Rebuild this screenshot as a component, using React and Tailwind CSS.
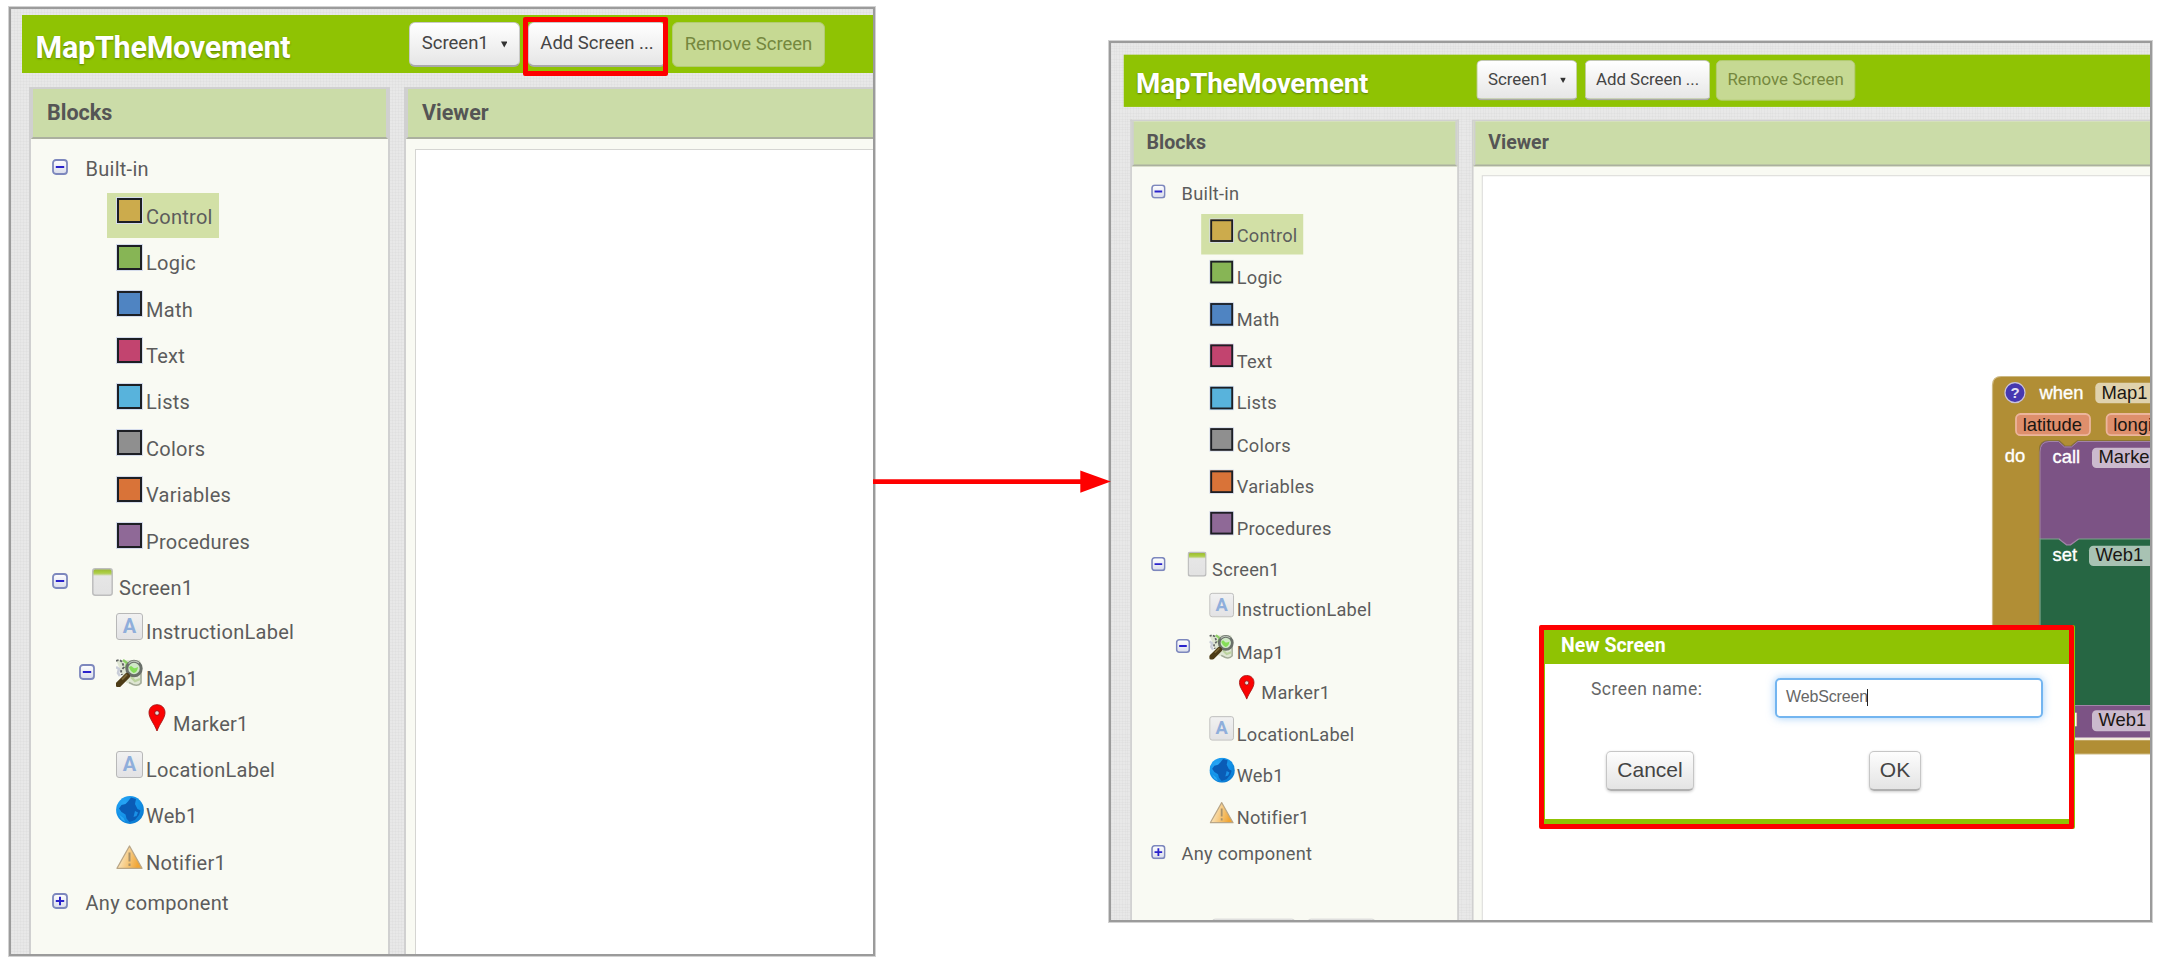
import React from "react";

const linen =
  "bg-[#e8e8e8] bg-[repeating-linear-gradient(0deg,rgba(0,0,0,0.018)_0px,rgba(0,0,0,0.018)_1px,transparent_1px,transparent_3px),repeating-linear-gradient(90deg,rgba(0,0,0,0.018)_0px,rgba(0,0,0,0.018)_1px,transparent_1px,transparent_3px)]";

function Toggle({ open }) {
  return (
    <svg className="h-4 w-4 shrink-0" viewBox="0 0 16 16">
      <defs>
        <linearGradient id="tg" x1="0" y1="0" x2="0" y2="1">
          <stop offset="0" stopColor="#ffffff" />
          <stop offset="1" stopColor="#d9dcea" />
        </linearGradient>
      </defs>
      <rect x="1" y="1" width="14" height="14" rx="3" fill="url(#tg)" stroke="#7d87bd" strokeWidth="1.800" />
      <path d={open ? "M3.800 8h8.400" : "M3.800 8h8.400M8 3.800v8.400"} stroke="#2a22cc" strokeWidth="2" />
    </svg>
  );
}

function Swatch({ tone }) {
  return (
    <span className={`h-[25px] w-[25px] border-2 border-[#1d1f24] shadow-[0_0_0_1px_#d5dcec] ${tone}`} />
  );
}

function PhoneIcon() {
  return (
    <svg className="h-7 w-[21px]" viewBox="0 0 21 28">
      <defs>
        <linearGradient id="ph" x1="0" y1="0" x2="0" y2="1">
          <stop offset="0" stopColor="#98b437" />
          <stop offset="0.130" stopColor="#a9cc3c" />
          <stop offset="0.190" stopColor="#b4cf60" />
          <stop offset="0.270" stopColor="#e6e6e6" />
          <stop offset="1" stopColor="#e2e2e2" />
        </linearGradient>
      </defs>
      <rect x="0.800" y="0.800" width="19.400" height="26.400" rx="2.400" fill="url(#ph)" stroke="#bdbdbd" strokeWidth="1.500" />
    </svg>
  );
}

function LabelIcon() {
  return (
    <span className="flex h-[27px] w-[27px] items-center justify-center rounded-[3px] border-[1.5px] border-[#b8b8b8] bg-linear-to-b from-[#f1f1f1] to-[#e2e2e4] pb-px text-[20px] leading-none font-bold text-[#8faedb]">
      A
    </span>
  );
}

function MapIcon() {
  return (
    <svg className="h-7 w-7" viewBox="0 0 28 28">
      <path d="M0 1h24l1 8v15q-3 3-8 1.500l-7-2-4-8z" fill="#dfe6d3" />
      <path d="M25 12v12q-3 3.500-8 1.500l-4-2" fill="none" stroke="#a3ab98" strokeWidth="1.600" />
      <path d="M0 2q4-2 6 1l2 5-3 4 1 4" fill="none" stroke="#5f6262" strokeWidth="1.800" strokeDasharray="2.500 1.500" />
      <path d="M0 8l3 2-1 4 2 3" fill="none" stroke="#c9cdd8" strokeWidth="2.600" />
      <path d="M7 1l4 3-1 5" fill="none" stroke="#8ccf66" strokeWidth="2.400" />
      <path d="M15 18l4 4 5-2" fill="none" stroke="#bcd39f" strokeWidth="2.400" />
      <circle cx="18" cy="9.500" r="7.200" fill="#cfe8c6" stroke="#6a7069" strokeWidth="3" />
      <path d="M13 8.500q2-3 4 0 2 1.500 5-.5-.5 5.500-4.500 6-3-1.500-4.500-5.500z" fill="#85dd58" />
      <path d="M12.500 4.500q5-4.500 10.500-.5" fill="none" stroke="#b9c2b7" strokeWidth="1.200" />
      <path d="M11 17l-8.500 8.500" stroke="#4d3c17" strokeWidth="6" strokeLinecap="round" />
      <path d="M11 15.500L6 20.500" stroke="#7c6836" strokeWidth="1.800" />
    </svg>
  );
}

function MarkerIcon() {
  return (
    <svg className="h-7 w-[18px]" viewBox="0 0 18 28">
      <path d="M9 .7c4.700 0 8 3.300 8 8 0 5.500-5 10.300-8 18.300C6 19 1 14.200 1 8.700 1 4 4.300.7 9 .7z" fill="#fb0202" stroke="#a31515" strokeWidth="0.900" />
      <circle cx="9" cy="9" r="2.300" fill="#e9d8d8" stroke="#8f1010" strokeWidth="0.900" />
    </svg>
  );
}

function GlobeIcon() {
  return (
    <svg className="h-7 w-7" viewBox="0 0 28 28">
      <defs>
        <radialGradient id="gl" cx="0.300" cy="0.250" r="0.900">
          <stop offset="0" stopColor="#27a5f5" />
          <stop offset="0.600" stopColor="#1190e6" />
          <stop offset="1" stopColor="#0b74cb" />
        </radialGradient>
      </defs>
      <circle cx="14" cy="14" r="13.900" fill="url(#gl)" />
      <path d="M15 1.500l5 1.500-1 5 2.500 5 3 1.500-1.500 4.500-4 5-5.500 2-3-3.500-1-4-4-2.500-2.500-3.500 2.500-3.500 4-1 2.500-2.500z" fill="#0a5cb6" />
      <path d="M19 15l3 1.500-1.500 3.500-3 1z" fill="#1a90e6" />
      <path d="M3 18.500l4.500 3.500 2 4-4-2.500z" fill="#35b2fa" opacity="0.700" />
    </svg>
  );
}

function WarnIcon() {
  return (
    <svg className="h-7 w-7" viewBox="0 0 28 28">
      <defs>
        <linearGradient id="wn" x1="0" y1="0" x2="1" y2="0.300">
          <stop offset="0.200" stopColor="#fbe9c4" />
          <stop offset="1" stopColor="#f0a534" />
        </linearGradient>
      </defs>
      <path d="M13.500 3L26 25.300H1z" fill="url(#wn)" stroke="#b9a687" strokeWidth="1.300" strokeLinejoin="round" />
      <path d="M13.500 9.500v9M13.500 20.500v2.500" stroke="#a8916a" strokeWidth="2" />
    </svg>
  );
}

const rows = [
  { text: "Built-in", h: "h-[47.7px]", pad: "pl-[21px]", toggle: "open", plain: true },
  { text: "Control", h: "h-[46.45px]", pad: "pl-[48px]", icon: <Swatch tone="bg-[#ccab4c]" />, selected: true },
  { text: "Logic", h: "h-[46.45px]", pad: "pl-[48px]", icon: <Swatch tone="bg-[#87b555]" /> },
  { text: "Math", h: "h-[46.45px]", pad: "pl-[48px]", icon: <Swatch tone="bg-[#4f84c2]" /> },
  { text: "Text", h: "h-[46.45px]", pad: "pl-[48px]", icon: <Swatch tone="bg-[#c2446f]" /> },
  { text: "Lists", h: "h-[46.45px]", pad: "pl-[48px]", icon: <Swatch tone="bg-[#58b3dc]" /> },
  { text: "Colors", h: "h-[46.45px]", pad: "pl-[48px]", icon: <Swatch tone="bg-[#8f8f8f]" /> },
  { text: "Variables", h: "h-[46.45px]", pad: "pl-[48px]", icon: <Swatch tone="bg-[#d97338]" /> },
  { text: "Procedures", h: "h-[45.9px]", pad: "pl-[48px]", icon: <Swatch tone="bg-[#8f6997]" /> },
  { text: "Screen1", h: "h-[44.8px]", pad: "pl-[21px]", toggle: "open", icon: <PhoneIcon /> },
  { text: "InstructionLabel", h: "h-[46.3px]", pad: "pl-[48px]", icon: <LabelIcon /> },
  { text: "Map1", h: "h-[45.5px]", pad: "pl-[48px]", toggle: "open", icon: <MapIcon /> },
  { text: "Marker1", h: "h-[45.8px]", pad: "pl-[75px]", icon: <MarkerIcon /> },
  { text: "LocationLabel", h: "h-[46px]", pad: "pl-[48px]", icon: <LabelIcon /> },
  { text: "Web1", h: "h-[47px]", pad: "pl-[48px]", icon: <GlobeIcon /> },
  { text: "Notifier1", h: "h-[39.7px]", pad: "pl-[48px]", icon: <WarnIcon /> },
  { text: "Any component", h: "h-[46px]", pad: "pl-[21px]", toggle: "closed", plain: true },
];

function TreeRow({ row }) {
  return (
    <div className={`flex items-start ${row.h} ${row.pad}`}>
      <div className={`flex shrink-0 items-center ${row.plain ? "h-[44px] w-[33.5px]" : "h-[35px] w-[27.5px]"}`}>
        {row.toggle && <Toggle open={row.toggle === "open"} />}
      </div>
      <div className={`flex h-[45px] items-start ${row.plain ? "" : "pl-[9px]"} ${row.selected ? "bg-[#d2e0a6] pr-[6px]" : ""}`}>
        {row.icon && <span className="mr-[2.5px] flex h-9 w-7 items-center justify-center">{row.icon}</span>}
        <span className="text-[20px] leading-[49.500px] tracking-[0.270px] whitespace-nowrap text-[#5c5c5c]">{row.text}</span>
      </div>
    </div>
  );
}

function BarButton({ children, className }) {
  return (
    <div
      className={`flex h-[45px] items-center justify-center rounded-[6px] border border-[#c9c9c9] border-b-2 border-b-[#a9a9a9] bg-linear-to-b from-white to-[#e6e6e6] pt-px text-[18.5px] whitespace-nowrap text-[#444] ${className}`}
    >
      {children}
    </div>
  );
}

function PanelHeader({ children }) {
  return (
    <div className="h-[50px] border-x-2 border-b-2 border-x-[#d0d0d0] border-b-[#abb09f] bg-[#cbdca8] pl-[14px] text-[21.5px] leading-[48.500px] font-bold text-[#555]">
      {children}
    </div>
  );
}

function Designer({ className, highlight }) {
  return (
    <div className={`flex h-[1000px] w-[1200px] flex-col font-['Roboto',sans-serif] ${linen} ${className}`}>
      <div className="flex h-[58px] shrink-0 items-start bg-[#8fc303] pl-[13.500px]">
        <div className="w-[373.500px] text-[30.500px] leading-[65px] font-bold tracking-[-0.250px] text-white [text-shadow:0_1px_2px_rgba(0,0,0,0.35)]">
          MapTheMovement
        </div>
        <div className="mt-[6.500px] flex">
          <BarButton className="w-[111px]">
            Screen1
            <svg className="ml-3 h-[7px] w-[6.500px]" viewBox="0 0 6.5 7">
              <path d="M0 .5h6.500L3.250 6.500z" fill="#333" />
            </svg>
          </BarButton>
          <div className="relative ml-[8px]">
            <BarButton className="w-[138px]">Add Screen ...</BarButton>
            {highlight && (
              <div className="absolute -top-[5px] -left-[5px] h-[59px] w-[145px] rounded-[2px] border-[5px] border-[#fe0000]" />
            )}
          </div>
          <div className="ml-[6px] flex h-[45px] w-[153px] items-center justify-center rounded-[6px] border border-[#b3cb74] bg-[#c6d993] pt-px text-[18.5px] whitespace-nowrap text-[#75883e]">
            Remove Screen
          </div>
        </div>
      </div>
      <div className="mt-[14px] flex min-h-0 flex-1 pl-[7px]">
        <div className="flex w-[361px] flex-col border-2 border-b-0 border-[#d0d0d0] bg-[#f9faf3]">
          <PanelHeader>Blocks</PanelHeader>
          <div className="pt-[6px]">
            {rows.map((row) => (
              <TreeRow key={row.text} row={row} />
            ))}
            <div className="mt-[50px] flex gap-[3px] pl-[87px]">
              <span className="h-6 w-[93px] rounded-[5px] border border-[#cfcfcf] bg-[#f5f5f5]" />
              <span className="ml-[9px] h-6 w-[76px] rounded-[5px] border border-[#cfcfcf] bg-[#f5f5f5]" />
            </div>
          </div>
        </div>
        <div className="ml-[14px] flex flex-1 flex-col border-2 border-[#d0d0d0] bg-[#f9faf3]">
          <PanelHeader>Viewer</PanelHeader>
          <div className="mt-[10px] ml-[9px] flex-1 border border-[#d5d5d2] bg-white" />
        </div>
      </div>
    </div>
  );
}

function Blocks() {
  return (
    <svg
      className="absolute top-[317px] left-[839px] h-[400px] w-[202px] font-['Liberation_Sans',Arial,sans-serif] text-[18.4px]"
      viewBox="0 0 202 400"
    >
      <path d="M42.500 394V25q0-8.500 9-8.500H240V394z" fill="#b18e35" stroke="#cdb983" strokeWidth="1.200" />
      <path d="M89.500 378V90q0-9.500 9-9.500h10.500l6 5.500h6l6.500-5.500H240V378z" fill="#7c5385" stroke="#8a7434" strokeWidth="1.200" />
      <path d="M90 179V92q0-10 9-10.500h9.500l6 5.500h7l6.500-5.500H240" fill="none" stroke="#a384a9" strokeWidth="1" />
      <path d="M90 345.500V179H240V345.500z" fill="#266643" stroke="#7fa38d" strokeWidth="1.200" />
      <path d="M109 178l7.500 6.800h4l8.500-6.800z" fill="#7c5385" />
      <path d="M109 179l7.500 5.800h4l8-5.800" fill="none" stroke="#a384a9" strokeWidth="1.200" />
      <path d="M90 377.500V345.500H240V377.500z" fill="#7c5385" stroke="#a384a9" strokeWidth="1.200" />
      <path d="M90 379H240" stroke="#f3ecdc" strokeWidth="2.500" />
      <circle cx="65" cy="32.700" r="10" fill="#4638b0" stroke="#c9c2dc" strokeWidth="1.200" />
      <text x="65" y="38" textAnchor="middle" fontSize="15" fontWeight="700" fill="#e3e0f3">?</text>
      <rect x="145.300" y="22.700" width="80" height="20.500" rx="4.500" fill="#e0d2ae" />
      <rect x="66" y="54" width="74" height="21.200" rx="4.500" fill="#de8f6c" stroke="#ecb59c" strokeWidth="1.800" />
      <rect x="156.600" y="54" width="80" height="21.200" rx="4.500" fill="#de8f6c" stroke="#ecb59c" strokeWidth="1.800" />
      <rect x="142" y="87.700" width="80" height="20.300" rx="4.500" fill="#cbbace" />
      <rect x="139" y="185.800" width="80" height="20.300" rx="4.500" fill="#a8c2b3" />
      <rect x="142" y="350.300" width="80" height="21" rx="4.500" fill="#cbbace" />
      <g fill="#ffffff" stroke="#ffffff" strokeWidth="0.350">
        <text x="89.500" y="38.700">when</text>
        <text x="54.700" y="102">do</text>
        <text x="102.500" y="103">call</text>
        <text x="102.500" y="200.500">set</text>
        <text x="100" y="366">call</text>
      </g>
      <g fill="#1a1612">
        <text x="151.500" y="38.700">Map1</text>
        <text x="72.700" y="70.700">latitude</text>
        <text x="163.200" y="70.700">longitude</text>
        <text x="148.500" y="103">Marker1</text>
        <text x="145.500" y="200.500">Web1</text>
        <text x="148.500" y="366">Web1</text>
      </g>
    </svg>
  );
}

function DialogButton({ children, className }) {
  return (
    <div
      className={`flex h-10 items-center justify-center rounded-[5px] border border-[#c6c6c6] border-b-2 border-b-[#b0b0b0] bg-linear-to-b from-[#fdfdfd] to-[#e4e4e4] pb-px font-['Liberation_Sans',Arial,sans-serif] text-[21px] text-[#444] shadow-[0_1px_3px_rgba(0,0,0,0.200)] ${className}`}
    >
      {children}
    </div>
  );
}

function NewScreenDialog() {
  return (
    <div className="absolute top-[582px] left-[428px] h-[204px] w-[535px] rounded-[2px] border-[5px] border-[#fe0000] bg-white font-['Roboto',sans-serif] shadow-[1px_0_0_#8fc303]">
      <div className="flex h-[194px] flex-col border-b-[5px] border-l border-[#8fc303]">
        <div className="h-[34px] bg-[#8fc303] pl-[16px] text-[19.500px] leading-[31px] font-bold text-white">New Screen</div>
        <div className="flex pl-[46px]">
          <div className="w-[184px] pt-[12.500px] text-[17.500px] leading-[24px] tracking-[0.450px] text-[#666]">Screen name:</div>
          <div className="mt-[14px] flex h-10 w-[268px] items-center rounded-[5px] border-2 border-[#73b5f0] pb-[2px] pl-[9px] font-['Liberation_Sans',Arial,sans-serif] text-[16px] tracking-[-0.150px] text-[#666] shadow-[0_0_9px_rgba(110,180,245,0.650)]">
            WebScreen
            <span className="-ml-px h-[17px] w-[1.500px] bg-[#222]" />
          </div>
        </div>
        <div className="mt-[33px] flex pl-[61px]">
          <DialogButton className="w-[88px]">Cancel</DialogButton>
          <DialogButton className="ml-[175px] w-[52px]">OK</DialogButton>
        </div>
      </div>
    </div>
  );
}

export default function App() {
  return (
    <div className="flex h-[971px] w-[2171px] items-start overflow-hidden bg-white pt-[7px] pl-[9px]">
      <div className="h-[949px] w-[866px] shrink-0 overflow-hidden border-2 border-[#9b9b9b] shadow-[0_0_0_1px_#d2d2d2]">
        <Designer className="pt-[6px] pl-[11px]" highlight />
      </div>
      <svg className="relative z-10 mt-[461px] h-6 w-[234px] shrink-0 overflow-visible" viewBox="0 0 234 24">
        <path d="M-2 13.600h210" stroke="#fe0000" strokeWidth="4.600" />
        <path d="M205.300 2.500l30.500 11.100-30.500 11.100z" fill="#fe0000" />
      </svg>
      <div className="relative mt-[34px] h-[881px] w-[1043px] shrink-0 overflow-hidden border-2 border-[#9b9b9b] shadow-[0_0_0_1px_#d2d2d2]">
        <Designer className="origin-top-left scale-x-[0.911] scale-y-[0.9] pt-[12.800px] pl-[14px]" />
        <Blocks />
        <NewScreenDialog />
      </div>
    </div>
  );
}
